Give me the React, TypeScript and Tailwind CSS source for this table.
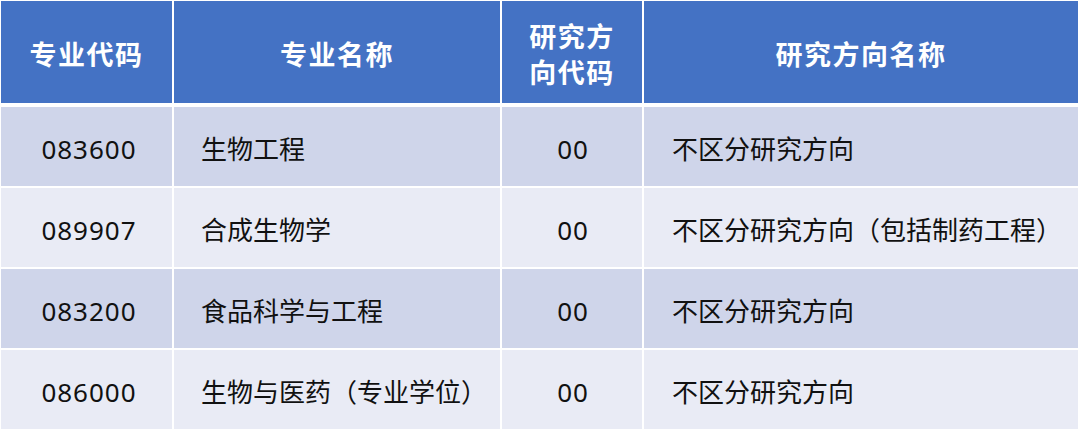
const rows = [
  { code: "083600", name: "生物工程", dir: "00", dirName: "不区分研究方向" },
  { code: "089907", name: "合成生物学", dir: "00", dirName: "不区分研究方向（包括制药工程）" },
  { code: "083200", name: "食品科学与工程", dir: "00", dirName: "不区分研究方向" },
  { code: "086000", name: "生物与医药（专业学位）", dir: "00", dirName: "不区分研究方向" },
];

const cols = "grid grid-cols-[171px_326px_140px_434px] gap-x-[2px]";

export default function App() {
  return (
    <div
      className="w-[1080px] h-[430px] bg-white pt-[1px] pl-[1px] overflow-hidden"
      style={{ fontFamily: '"Noto Sans", "Noto Sans CJK SC", sans-serif' }}
    >
      <div className="flex flex-col gap-[2px] w-[1077px]">
        {/* Header */}
        <div className={`${cols} h-[102px] mb-[2px] text-white font-bold text-[27px] tracking-[1.5px] leading-[36px]`}>
          <div className="bg-[#4472c4] flex items-center justify-center pt-[5px]">专业代码</div>
          <div className="bg-[#4472c4] flex items-center justify-center pt-[5px]">专业名称</div>
          <div className="bg-[#4472c4] flex items-center justify-center text-center pt-[5px]">
            研究方
            <br />
            向代码
          </div>
          <div className="bg-[#4472c4] flex items-center justify-center pt-[5px]">研究方向名称</div>
        </div>

        {/* Body */}
        {rows.map((r, i) => {
          const bg = i % 2 === 0 ? "bg-[#cfd5ea]" : "bg-[#e9ebf5]";
          return (
            <div key={r.code} className={`${cols} h-[79px] text-[26px] text-[#111] leading-none`}>
              <div className={`${bg} flex items-center justify-center pt-[4px] pl-[5px] tracking-[1px]`}>
                {r.code}
              </div>
              <div className={`${bg} flex items-center pl-[27px] pt-[4px]`}>{r.name}</div>
              <div className={`${bg} flex items-center justify-center pt-[4px] pl-[2px] tracking-[1px]`}>
                {r.dir}
              </div>
              <div className={`${bg} flex items-center pl-[28px] pt-[4px]`}>{r.dirName}</div>
            </div>
          );
        })}
      </div>
    </div>
  );
}
